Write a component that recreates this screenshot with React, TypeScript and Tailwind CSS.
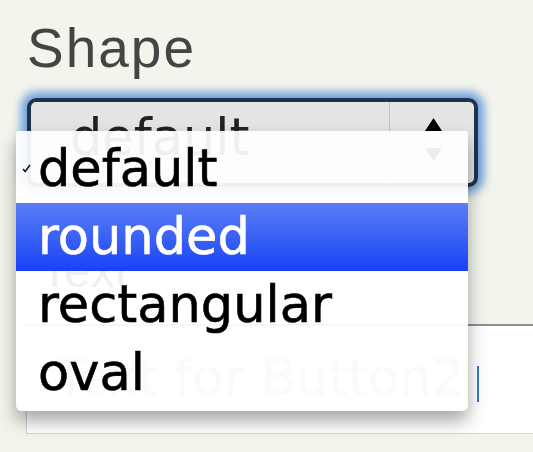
import { useState } from "react";

const options = ["default", "rounded", "rectangular", "oval"];

const CheckMark = () => (
  <svg width="9" height="9" viewBox="0 0 9 9" className="absolute left-[6px] top-[29px]">
    <path d="M1 5 L3.2 7.5 L8 1" fill="none" stroke="#111" strokeWidth="1.5" />
  </svg>
);

const SelectArrows = () => (
  <div className="flex w-[84px] flex-col items-center gap-[17px] pt-[16px] pl-[2px]">
    <svg width="17" height="13" viewBox="0 0 17 13">
      <path d="M8.5 0 L17 13 L0 13 Z" fill="#000" />
    </svg>
    <svg width="17" height="13" viewBox="0 0 17 13">
      <path d="M0 0 L17 0 L8.5 13 Z" fill="#000" />
    </svg>
  </div>
);

export default function App() {
  const [selected] = useState("default");
  const [hovered] = useState("rounded");

  return (
    <div className="relative h-[452px] w-[533px] overflow-hidden bg-[#f3f5ec] font-['DejaVu_Sans',sans-serif]">
      <div className="pl-[27px] pt-[18px] font-['Liberation_Sans',sans-serif] text-[55px] leading-[60px] tracking-[2px] text-[#444]">
        Shape
      </div>

      {/* focused select */}
      <div className="ml-[27px] mt-[20px] w-[451px] rounded-[9px] shadow-[0_0_10px_6px_#6d9edd]">
        <div className="flex h-[89px] rounded-[9px] border-[4px] border-[#1d334f] bg-[#e4e4e4]">
          <div className="flex-1 border-r border-[#c4c4c4] pl-[39px] pt-[6px] text-[51px] leading-[60px] text-[#222]">
            {selected}
          </div>
          <SelectArrows />
        </div>
      </div>

      <div className="pl-[40px] pt-[56px] font-['Liberation_Sans',sans-serif] text-[48px] leading-[56px] text-[#333]">
        Text
      </div>

      <div className="relative ml-[26px] mt-[25px] h-[110px] w-[520px] border-t-2 border-l border-b border-t-[#8e8e8e] border-l-[#cfcfcf] border-b-[#d6d6d6] bg-white">
        <div className="pl-[28px] pt-[22px] text-[51px] leading-[60px] text-[#b0b0b0]">
          Text for Button2
        </div>
        <div className="absolute left-[450px] top-[40px] h-[36px] w-[2px] bg-[#3b73d6]" />
      </div>

      {/* open option list */}
      <div className="absolute left-[16px] top-[131px] w-[452px] rounded-b-[6px] rounded-t-[3px] bg-white/[0.93] py-[4px] shadow-[0_10px_18px_rgba(0,0,0,0.35)]">
        {options.map((opt) => (
          <div
            key={opt}
            className={
              opt === hovered
                ? "relative h-[68px] bg-gradient-to-b from-[#5b7df4] to-[#1b3ff5] pl-[22px] text-[51px] leading-[68px] text-white [-webkit-text-stroke:0.6px_white]"
                : "relative h-[68px] pl-[22px] text-[51px] leading-[68px] text-black [-webkit-text-stroke:0.6px_black]"
            }
          >
            {opt === selected && <CheckMark />}
            {opt}
          </div>
        ))}
      </div>
    </div>
  );
}
